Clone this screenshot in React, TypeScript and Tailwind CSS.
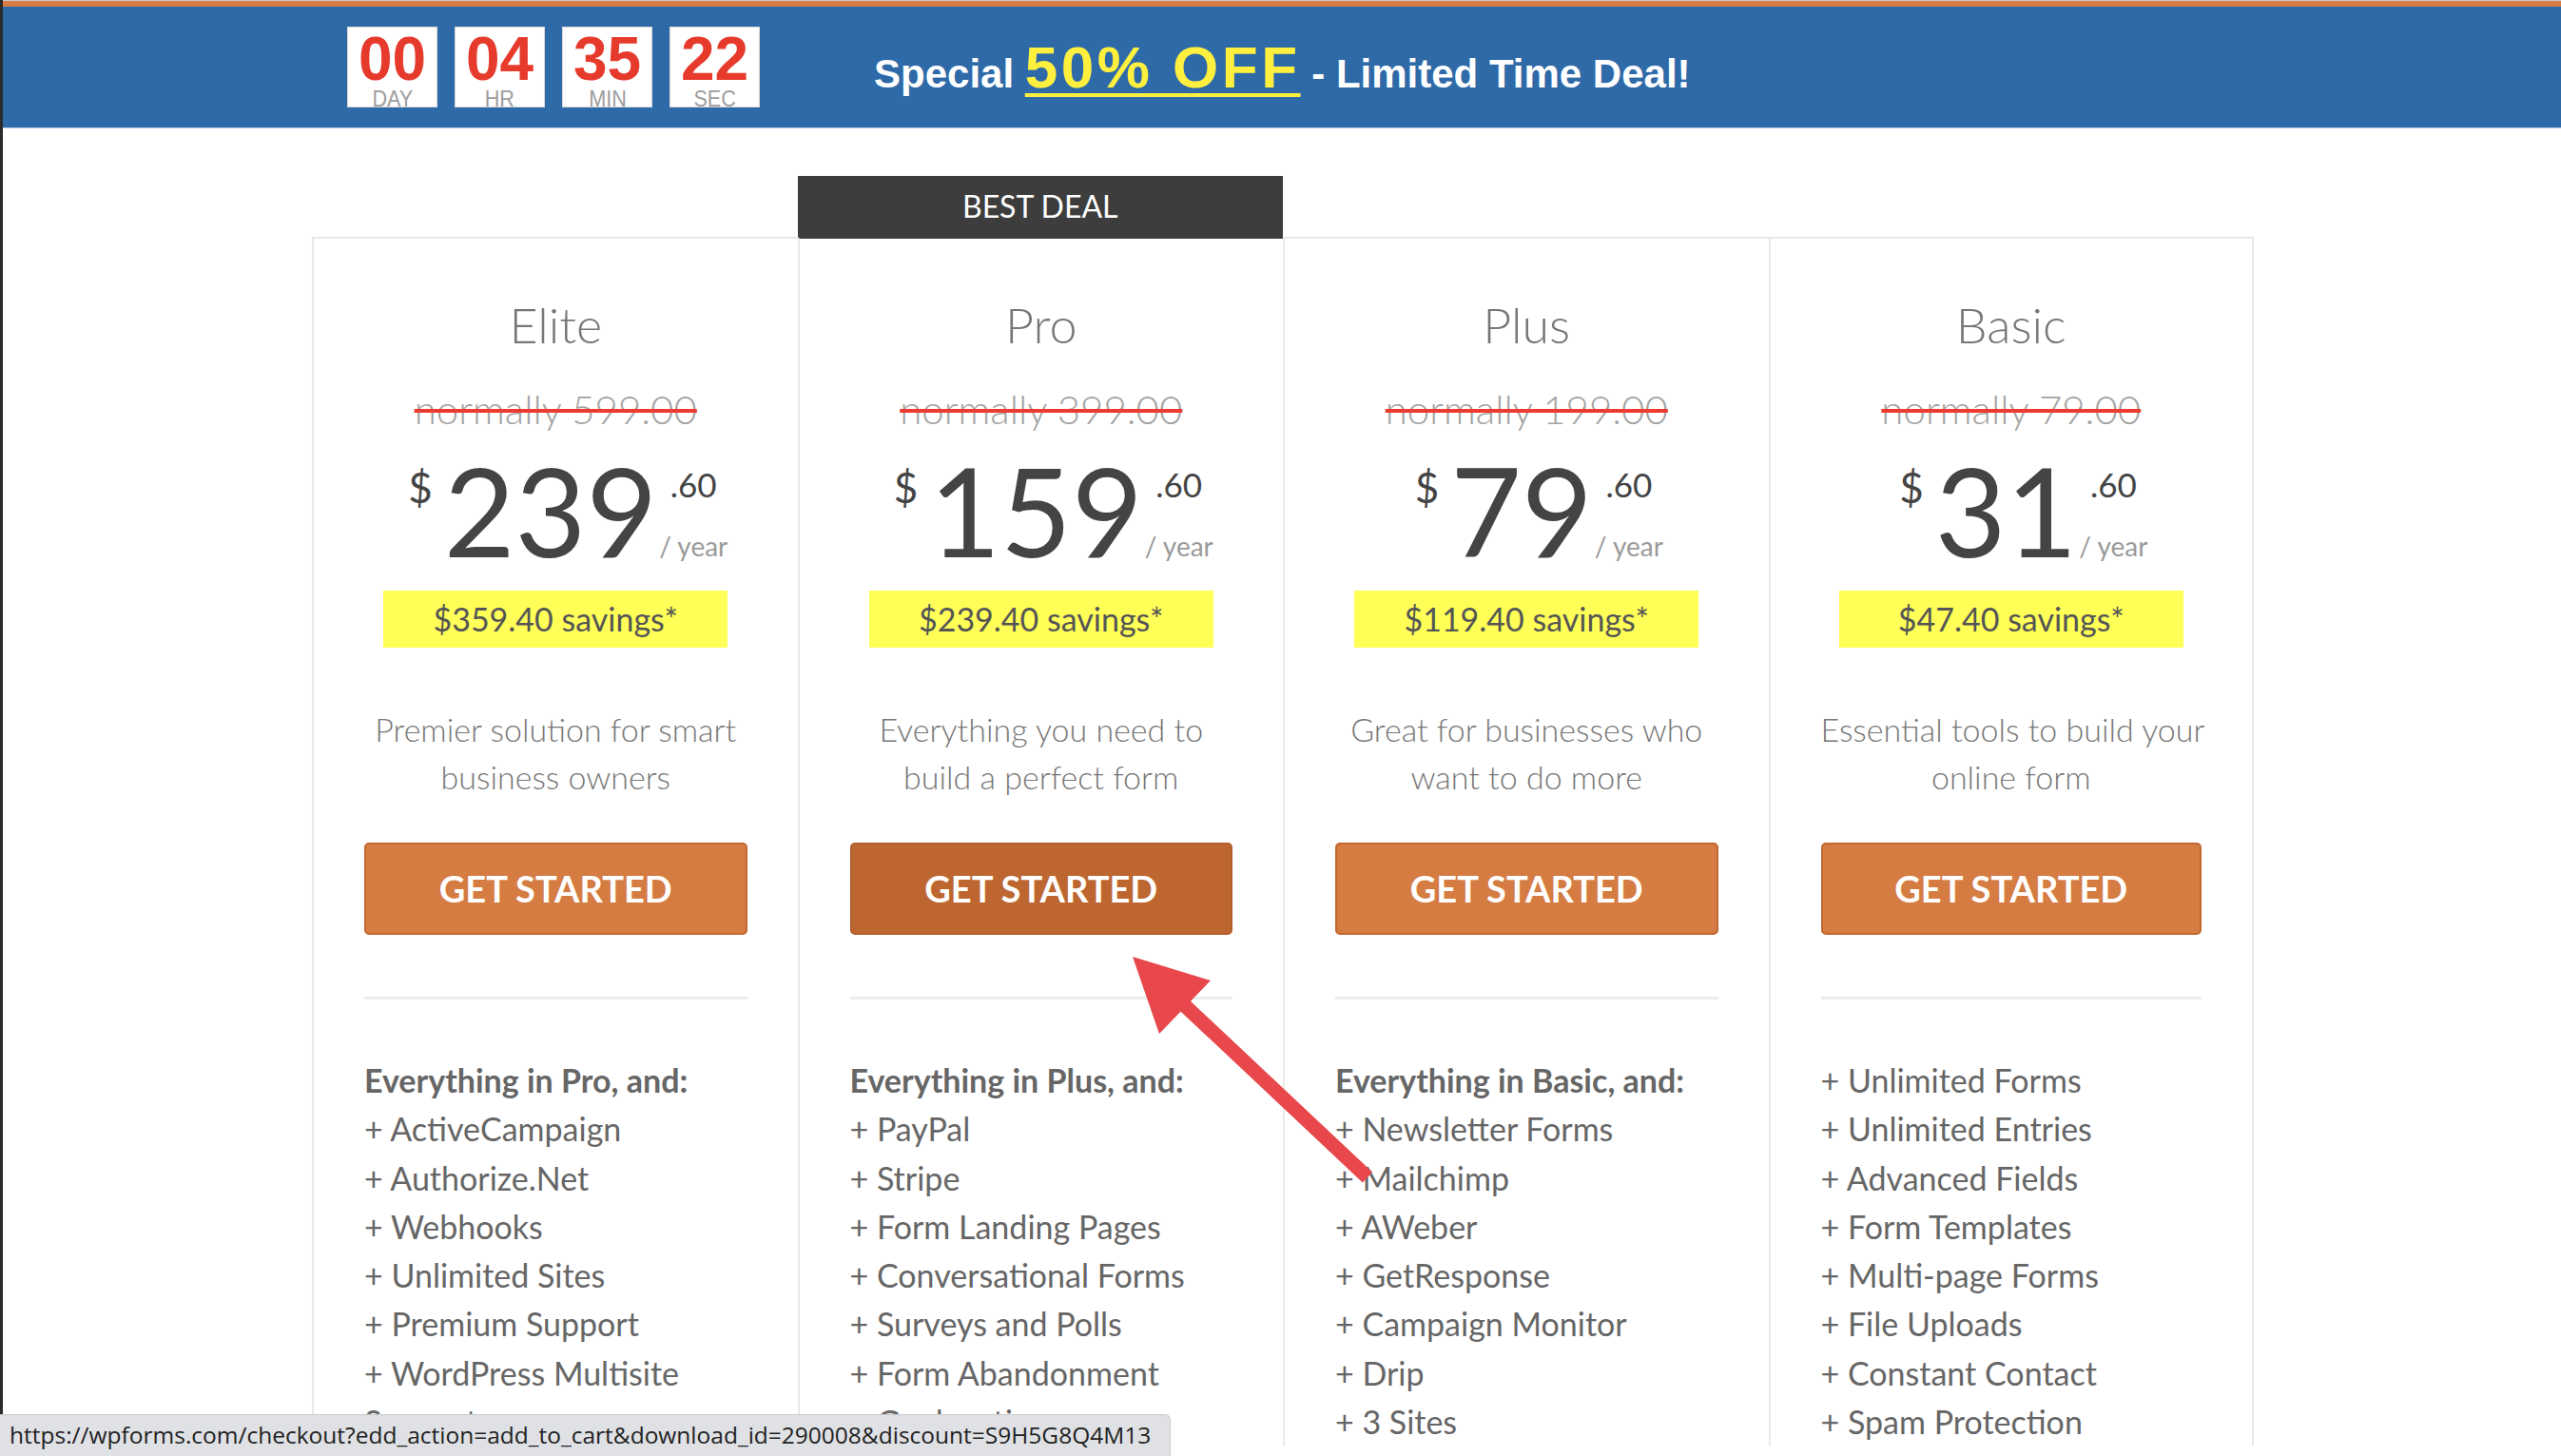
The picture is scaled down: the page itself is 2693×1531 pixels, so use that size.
import React from "react";

type Plan = {
  name: string;
  normal: string;
  price: string;
  savings: string;
  desc: string[];
  heading?: string;
  features: string[];
  best?: boolean;
};

const plans: Plan[] = [
  {
    name: "Elite",
    normal: "normally 599.00",
    price: "239",
    savings: "$359.40 savings*",
    desc: ["Premier solution for smart", "business owners"],
    heading: "Everything in Pro, and:",
    features: [
      "ActiveCampaign",
      "Authorize.Net",
      "Webhooks",
      "Unlimited Sites",
      "Premium Support",
      "WordPress Multisite Support",
    ],
  },
  {
    name: "Pro",
    normal: "normally 399.00",
    price: "159",
    savings: "$239.40 savings*",
    desc: ["Everything you need to", "build a perfect form"],
    heading: "Everything in Plus, and:",
    features: [
      "PayPal",
      "Stripe",
      "Form Landing Pages",
      "Conversational Forms",
      "Surveys and Polls",
      "Form Abandonment",
      "Geolocation",
    ],
    best: true,
  },
  {
    name: "Plus",
    normal: "normally 199.00",
    price: "79",
    savings: "$119.40 savings*",
    desc: ["Great for businesses who", "want to do more"],
    heading: "Everything in Basic, and:",
    features: [
      "Newsletter Forms",
      "Mailchimp",
      "AWeber",
      "GetResponse",
      "Campaign Monitor",
      "Drip",
      "3 Sites",
    ],
  },
  {
    name: "Basic",
    normal: "normally 79.00",
    price: "31",
    savings: "$47.40 savings*",
    desc: ["Essential tools to build your", "online form"],
    features: [
      "Unlimited Forms",
      "Unlimited Entries",
      "Advanced Fields",
      "Form Templates",
      "Multi-page Forms",
      "File Uploads",
      "Constant Contact",
      "Spam Protection",
    ],
  },
];

const timer = [
  { value: "00", label: "DAY" },
  { value: "04", label: "HR" },
  { value: "35", label: "MIN" },
  { value: "22", label: "SEC" },
];

const TimerBox = ({ value, label }: { value: string; label: string }) => (
  <div className="w-[95px] h-[85px] bg-white border border-[#d9d9d9] flex flex-col items-center font-['Liberation_Sans',Arial,sans-serif]">
    <div className="mt-[5px] h-[56px] text-[64px] leading-[56px] font-bold text-[#e63a2c]">
      {value}
    </div>
    <div className="mt-[3px] text-[24px] leading-[22px] text-[#9d9d9d] scale-x-[0.9]">
      {label}
    </div>
  </div>
);

const PlanColumn = ({ plan, last }: { plan: Plan; last: boolean }) => (
  <div
    className={`flex flex-col border-l-2 border-t-2 border-[#e9e9e9] px-[53px] pt-[60px] ${
      last ? "border-r-2" : ""
    } ${plan.best ? "border-t-[#3d3d3d]" : ""}`}
  >
    <div className="text-center text-[52px] leading-[60px] font-light text-[#777]">
      {plan.name}
    </div>
    <div className="mt-[35px] text-center">
      <span className="text-[42px] leading-[48px] font-light text-[#a3a3a3] line-through decoration-[#ee3a2f] decoration-[4px]">
        {plan.normal}
      </span>
    </div>
    <div className="mt-[18px] flex justify-center items-start pl-[26px] text-[#444]">
      <span className="mt-[18px] mr-[12px] text-[44px] leading-[44px]">$</span>
      <span className="text-[129px] leading-[129px]">{plan.price}</span>
      <div className="flex flex-col items-center ml-[2px]">
        <span className="mt-[20px] text-[35px] leading-[35px]">.60</span>
        <span className="mt-[33px] text-[28px] leading-[28px] text-[#9a9a9a]">/ year</span>
      </div>
    </div>
    <div className="mt-[20px] mx-auto w-[362px] h-[60px] bg-[#ffff57] text-center text-[34px] leading-[60px] text-[#555]">
      {plan.savings}
    </div>
    <div className="mt-[61px] text-center text-[34px] leading-[50px] font-light text-[#777]">
      {plan.desc.map((line) => (
        <div key={line} className="whitespace-nowrap">
          {line}
        </div>
      ))}
    </div>
    <button
      className={`mt-[44px] h-[97px] w-full rounded-[5px] border-2 text-[38px] font-bold text-white ${
        plan.best ? "bg-[#bd6630] border-[#b35e2b]" : "bg-[#d57c43] border-[#c2672f]"
      }`}
    >
      GET STARTED
    </button>
    <div className="mt-[65px] h-[3px] bg-[#ececec]" />
    <ul className="mt-[59px] text-[34px] leading-[51.3px] text-[#666]">
      {plan.heading && <li className="font-bold">{plan.heading}</li>}
      {plan.features.map((f) => (
        <li key={f}>+ {f}</li>
      ))}
    </ul>
  </div>
);

export default function App() {
  return (
    <div className="relative w-[2693px] h-[1531px] overflow-hidden bg-white">
      <div className="h-full border-l-[3px] border-[#2b2b2b] font-['Lato',sans-serif]">
        {/* promo banner */}
        <div className="h-[1px] bg-[#c9c9c9]" />
        <div className="h-[6px] bg-[#d67e45]" />
        <div className="h-[127px] bg-[#2f6aa8] flex items-center pl-[362px] gap-[120px]">
          <div className="flex gap-[18px]">
            {timer.map((t) => (
              <TimerBox key={t.label} value={t.value} label={t.label} />
            ))}
          </div>
          <div className="font-['Liberation_Sans',Arial,sans-serif] font-bold text-white text-[42px] whitespace-nowrap">
            Special{" "}
            <span className="text-[62px] tracking-[3.5px] text-[#fff03f] underline decoration-[4px] underline-offset-[6px]">
              50% OFF
            </span>{" "}
            - Limited Time Deal!
          </div>
        </div>
        <div className="h-[1px] bg-[#b3cbe5]" />

        {/* pricing table */}
        <div className="mt-[50px] ml-[325px] w-[2042px]">
          <div className="grid grid-cols-4 h-[64px]">
            <div />
            <div className="bg-[#3d3d3d] flex items-center justify-center text-[32px] text-white">
              BEST DEAL
            </div>
          </div>
          <div className="grid grid-cols-4">
            {plans.map((p, i) => (
              <PlanColumn key={p.name} plan={p} last={i === plans.length - 1} />
            ))}
          </div>
        </div>
      </div>

      {/* annotation arrow */}
      <svg
        className="absolute left-0 top-0 pointer-events-none"
        width="2693"
        height="1531"
        viewBox="0 0 2693 1531"
      >
        <line x1="1238" y1="1050" x2="1438" y2="1238" stroke="#e8474b" strokeWidth="15" />
        <polygon points="1191,1006 1273,1031 1219,1087" fill="#e8474b" />
      </svg>

      {/* browser status bubble */}
      <div className="absolute left-0 bottom-0 w-[1231px] h-[44px] bg-[#dfe1e5] border-t border-r border-[#c8cbd0] rounded-tr-[6px] flex items-center pl-[10px] font-['Open_Sans',sans-serif] text-[24.5px] text-[#222] whitespace-nowrap">
        https://wpforms.com/checkout?edd_action=add_to_cart&amp;download_id=290008&amp;discount=S9H5G8Q4M13
      </div>
    </div>
  );
}
